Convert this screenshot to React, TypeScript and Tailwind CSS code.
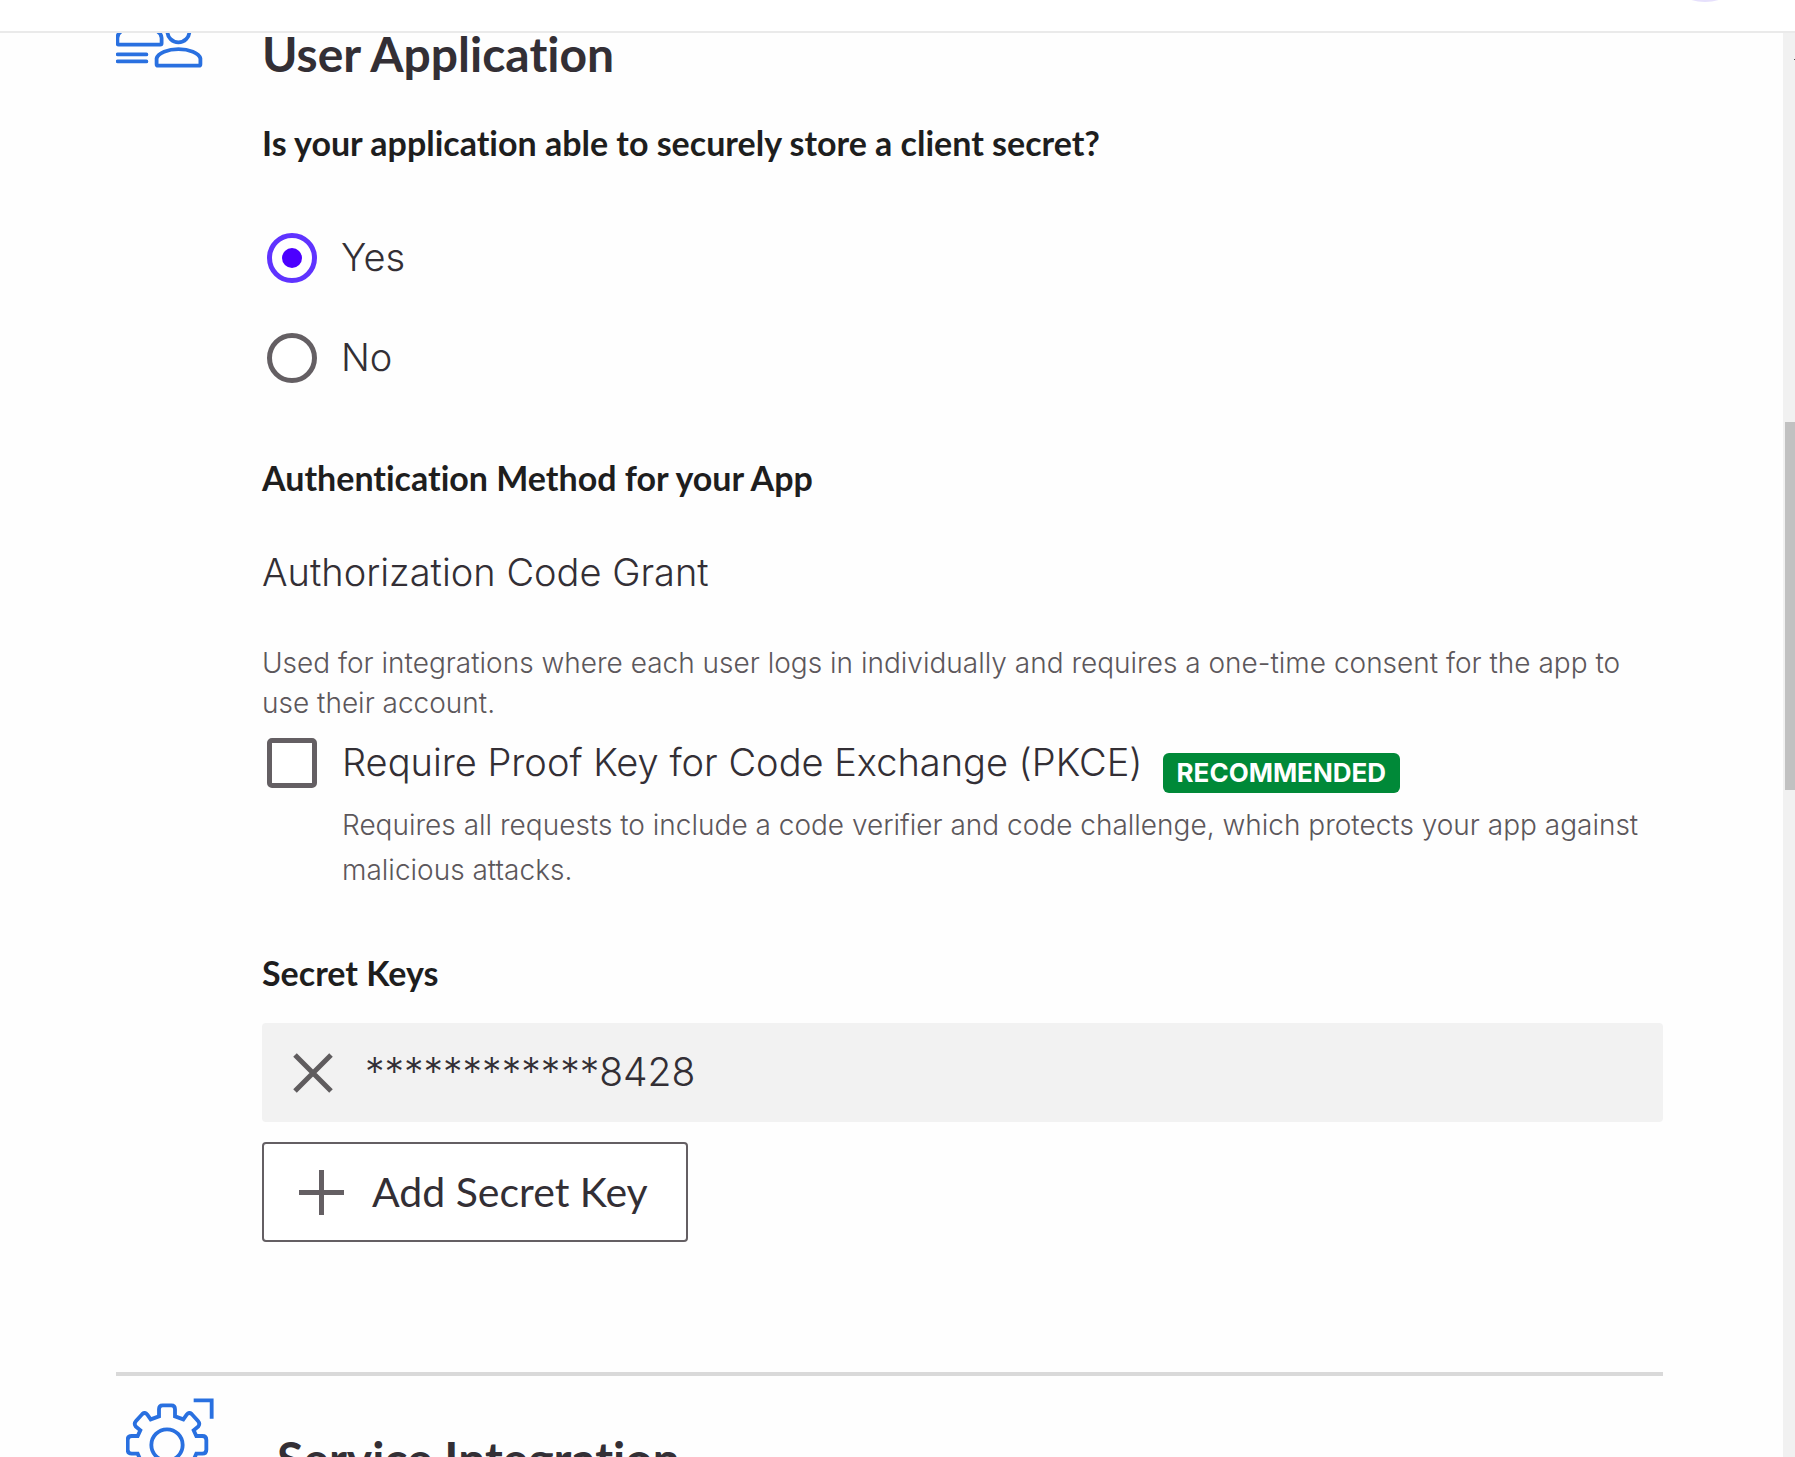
import React, { useState } from "react";

function UserCardIcon() {
  return (
    <svg viewBox="116 33 88 36" className="h-9 w-[88px]" fill="none" stroke="#2970e0" strokeWidth="3.8" strokeLinecap="round" strokeLinejoin="round" aria-hidden="true">
      <path d="M121 31.5Q117.4 34 117.4 38V43.2Q117.4 44.6 118.8 44.6H160.2Q161.6 44.6 161.6 43.2V38Q161.6 34 157.5 31.5" />
      <circle cx="178.4" cy="31.4" r="11" />
      <path d="M117.6 54.4H146.4M117.6 61.4H146.4" />
      <path d="M156.6 64.2V58.5C158 53 168 49.2 178.5 49.2S199 53 200.4 58.5V64.2Q200.4 65.7 198.9 65.7H158.1Q156.6 65.7 156.6 64.2Z" />
    </svg>
  );
}

function GearIcon() {
  return (
    <svg viewBox="60 39 264 264" className="size-[88px]" fill="none" stroke="#2970e0" strokeWidth="11.5" aria-hidden="true">
      <path d="M159 94V73Q159 61 170 61H196Q207 61 207 73V94L232 103L242 89Q249 80 257 87L276 108Q283 116 277 124L263 136L271 153H289Q301 153 301 165V194Q301 206 289 206H271L263 224L277 236Q283 244 276 252L257 273Q249 280 242 271L232 257L207 266V287Q207 299 196 299H170Q159 299 159 287V266L134 257L124 271Q117 280 109 273L90 252Q83 244 89 236L103 224L95 206H77Q65 206 65 194V165Q65 153 77 153H95L103 136L89 124Q83 116 90 108L109 87Q117 80 124 89L134 103Z" />
      <circle cx="183" cy="180" r="47" />
      <path d="M263 46H317V101" />
    </svg>
  );
}

function Choice({ label, checked, onSelect }: { label: string; checked: boolean; onSelect: () => void }) {
  return (
    <label className="flex items-center gap-6 pl-[5px] text-[38px] leading-[48px] font-light text-[#332f35]">
      <input
        type="radio"
        name="client-secret"
        checked={checked}
        onChange={onSelect}
        className="grid size-[50px] shrink-0 appearance-none place-content-center rounded-full border-5 border-[#645f63] bg-white checked:border-[#5f33ff] checked:before:size-5 checked:before:rounded-full checked:before:bg-[#4c00ff]"
      />
      <span className="pb-0.5">{label}</span>
    </label>
  );
}

function SubHeading({ className, children }: { className: string; children: React.ReactNode }) {
  return <h3 className={`font-['Lato',sans-serif] text-[34px] leading-10 font-bold text-[#1e1e1e] ${className}`}>{children}</h3>;
}

export default function App() {
  const [canStore, setCanStore] = useState(true);
  const [pkce, setPkce] = useState(false);

  return (
    <div className="flex h-screen flex-col overflow-hidden bg-[#fefefe] font-['Inter',sans-serif] [font-variant-ligatures:none]">
      <header className="relative h-[33px] shrink-0 overflow-hidden border-b-2 border-[#eaeaea] bg-white">
        <span className="absolute -top-[94px] right-[42px] size-24 rounded-full bg-[#e6e0fc]" />
      </header>

      <div className="flex min-h-0 flex-1">
        <main className="min-w-0 flex-1 overflow-hidden pr-[120px] pl-[116px]">
          <section className="flex">
            <div className="w-[146px] shrink-0">
              <UserCardIcon />
            </div>
            <div className="min-w-0 flex-1">
              <h2 className="font-['Lato',sans-serif] text-[48px] leading-[42px] font-bold text-[#332f35]">User Application</h2>

              <SubHeading className="mt-12">Is your application able to securely store a client secret?</SubHeading>
              <div className="mt-[70px] flex flex-col gap-[50px]">
                <Choice label="Yes" checked={canStore} onSelect={() => setCanStore(true)} />
                <Choice label="No" checked={!canStore} onSelect={() => setCanStore(false)} />
              </div>

              <SubHeading className="mt-[75px]">Authentication Method for your App</SubHeading>
              <p className="mt-[50px] text-[38px] leading-[48px] font-light text-[#332f35]">Authorization Code Grant</p>
              <p className="mt-[47px] text-[28px] leading-10 font-light text-[#5c575b]">
                Used for integrations where each user logs in individually and requires a one-time consent for the app to use their account.
              </p>

              <div className="mt-[10px] flex items-center pl-[5px]">
                <input
                  id="pkce"
                  type="checkbox"
                  checked={pkce}
                  onChange={(e) => setPkce(e.target.checked)}
                  className="size-[50px] shrink-0 appearance-none rounded-[5px] border-5 border-[#645f63] bg-white checked:bg-[#4c00ff]"
                />
                <label htmlFor="pkce" className="ml-[25px] pb-0.5 text-[38px] leading-[48px] font-light text-[#332f35]">
                  Require Proof Key for Code Exchange (PKCE)
                </label>
                <span className="mt-5 ml-5 rounded-md bg-[#008938] px-3.5 text-[26px] leading-10 font-bold text-white">RECOMMENDED</span>
              </div>
              <p className="mt-[10px] pl-20 text-[28px] leading-[45px] font-light text-[#5c575b]">
                Requires all requests to include a code verifier and code challenge, which protects your app against malicious attacks.
              </p>

              <SubHeading className="mt-[60px]">Secret Keys</SubHeading>
              <div className="mt-[30px] flex h-[99px] items-center rounded bg-[#f2f2f2] pl-[31px] text-[39px] font-light text-[#332f35]">
                <button type="button" aria-label="Remove secret key" className="mr-8">
                  <svg viewBox="0 0 40 40" className="size-10" stroke="#5f5c5e" strokeWidth="5" aria-hidden="true">
                    <path d="M2 2L38 38M38 2L2 38" />
                  </svg>
                </button>
                <span>************8428</span>
              </div>
              <button type="button" className="mt-5 flex h-[100px] items-center gap-7 rounded border-2 border-[#645f63] bg-white pr-[38px] pl-[35px] font-['Lato',sans-serif] text-[41px] text-[#332f35]">
                <svg viewBox="0 0 45 45" className="size-[45px]" stroke="#645f63" strokeWidth="5" aria-hidden="true">
                  <path d="M0 22.5H45M22.5 0V45" />
                </svg>
                Add Secret Key
              </button>
            </div>
          </section>

          <hr className="mt-[130px] border-t-4 border-[#d9d9d9]" />

          <section className="flex pt-[22px] pl-[10px]">
            <div className="w-[151px] shrink-0">
              <GearIcon />
            </div>
            <h2 className="pt-10 font-['Lato',sans-serif] text-[48px] leading-[42px] font-bold text-[#332f35]">Service Integration</h2>
          </section>
        </main>

        <div className="flex w-3 shrink-0 flex-col items-end bg-[#f1f1f1] pt-[26px]" aria-hidden="true">
          <span className="h-px w-px bg-[#505050]" />
          <span className="mt-[362px] h-[368px] w-[10px] bg-[#c1c1c1]" />
        </div>
      </div>
    </div>
  );
}
